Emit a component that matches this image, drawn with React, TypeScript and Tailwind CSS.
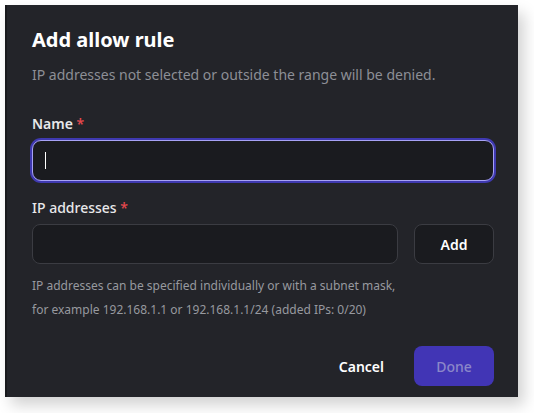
export default function App() {
  const font = { fontFamily: '"Noto Sans", "Open Sans", sans-serif' }

  return (
    <div className="w-[534px] h-[413px] bg-white overflow-hidden" style={font}>
      <div className="ml-[5px] mt-[5px] w-[513px] h-[392px] bg-[#232429] border-l-2 border-[#18191c] shadow-[6px_8px_14px_rgba(0,0,0,0.18)] flex flex-col pl-[25px] pr-[24px] pt-[21px]">
        <h2 className="text-[20px] leading-[28px] font-bold text-white">Add allow rule</h2>
        <p className="mt-[11px] text-[14px] leading-[20px] text-[#8d8f96]">
          IP addresses not selected or outside the range will be denied.
        </p>

        <label className="mt-[29px] text-[14px] leading-[20px] font-semibold text-[#e8e8ea]">
          Name <span className="text-[#e5484d]">*</span>
        </label>
        <div className="mt-[6px] h-[41px] rounded-[9px] bg-[#1a1b1f] border border-[#a7a2f5] ring-2 ring-[#3f39b0] flex items-center px-[12px]">
          <div className="w-px h-[17px] bg-white" />
        </div>

        <label className="mt-[17px] text-[14px] leading-[20px] font-medium text-[#e8e8ea]">
          IP addresses <span className="text-[#e5484d]">*</span>
        </label>
        <div className="mt-[6px] flex gap-4">
          <div className="flex-1 h-[40px] rounded-[8px] bg-[#1a1b1f] border border-[#3b3c42]" />
          <button className="w-[80px] h-[40px] rounded-[8px] bg-[#1a1b1f] border border-[#3b3c42] text-[14px] font-semibold text-white">
            Add
          </button>
        </div>

        <div className="mt-[10px] text-[12px] leading-[24px] text-[#97999f]">
          <p>IP addresses can be specified individually or with a subnet mask,</p>
          <p>for example 192.168.1.1 or 192.168.1.1/24 (added IPs: 0/20)</p>
        </div>

        <div className="mt-[24px] flex items-center justify-end gap-[30px]">
          <button className="text-[14px] font-semibold text-white">Cancel</button>
          <button className="w-[80px] h-[40px] rounded-[8px] bg-[#4135b5] text-[14px] font-medium text-[#8b87c9]">
            Done
          </button>
        </div>
      </div>
    </div>
  )
}
